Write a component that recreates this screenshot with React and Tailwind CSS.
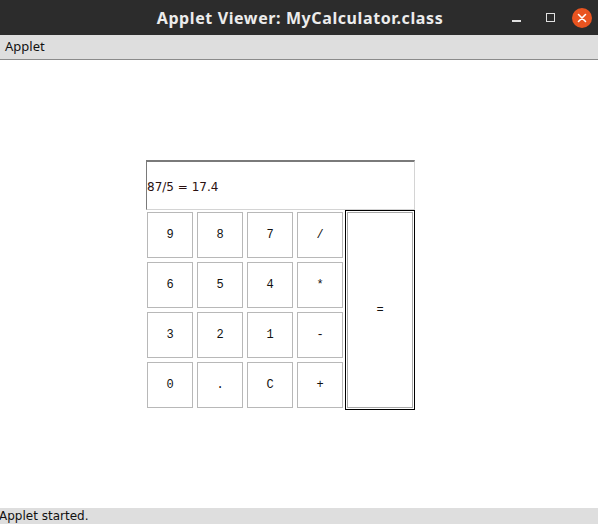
const keys = [
  ["9", "8", "7", "/"],
  ["6", "5", "4", "*"],
  ["3", "2", "1", "-"],
  ["0", ".", "C", "+"],
]

function Key({ label }) {
  return (
    <div className="w-[50px] h-[50px] p-[2px]">
      <div className="w-full h-full bg-white border border-[#b8b8b8] flex items-center justify-center text-[12px] text-[#111] font-['Liberation_Mono',monospace]">
        {label}
      </div>
    </div>
  )
}

export default function App() {
  return (
    <div className="w-[598px] h-[524px] flex flex-col bg-white overflow-hidden font-['Noto_Sans',sans-serif]">
      {/* Title bar */}
      <div className="h-[35px] bg-[#2c2c2c] flex items-center relative shrink-0">
        <div className="flex-1 text-center text-[16px] font-bold text-[#ececec] pl-[2px] tracking-[0.6px]">
          Applet Viewer: MyCalculator.class
        </div>
        <div className="absolute right-[6px] top-0 h-[35px] flex items-center">
          <div className="w-[34px] flex justify-center pt-[7px]">
            <div className="w-[9px] h-[2px] bg-[#e0e0e0]" />
          </div>
          <div className="w-[34px] flex justify-center">
            <div className="w-[9px] h-[9px] border-[1.5px] border-[#e0e0e0]" />
          </div>
          <div className="w-[20px] h-[20px] ml-[5px] rounded-full bg-[#e95420] flex items-center justify-center">
            <svg width="10" height="10" viewBox="0 0 10 10">
              <path d="M1.5 1.5 L8.5 8.5 M8.5 1.5 L1.5 8.5" stroke="#fff" strokeWidth="1.6" strokeLinecap="round" />
            </svg>
          </div>
        </div>
      </div>

      {/* Menu bar */}
      <div className="h-[25px] bg-[#dedede] border-b border-[#8a8a8a] flex items-center px-[5px] text-[13px] text-[#111] shrink-0">
        Applet
      </div>

      {/* Applet area */}
      <div className="flex-1 pl-[145px] pt-[100px]">
        <div className="w-[270px]">
          <div className="ml-[1px] w-[269px] h-[50px] border-t-2 border-l border-[#7a7a7a] border-r border-b border-r-[#d4d4d4] border-b-[#d4d4d4] flex items-center text-[12px] text-[#2a1010] font-['DejaVu_Sans',sans-serif] pt-[2px]">
            87/5 = 17.4
          </div>
          <div className="flex">
            <div className="flex flex-col">
              {keys.map((row, i) => (
                <div key={i} className="flex">
                  {row.map((k) => (
                    <Key key={k} label={k} />
                  ))}
                </div>
              ))}
            </div>
            <div className="w-[70px] h-[200px] border border-black p-[1px] bg-white">
              <div className="w-full h-full border border-[#a8a8a8] flex items-center justify-center text-[12px] text-[#111] font-['Liberation_Mono',monospace]">
                =
              </div>
            </div>
          </div>
        </div>
      </div>

      {/* Status bar */}
      <div className="h-[16px] bg-[#dedede] text-[12px] leading-[16px] text-[#111] -ml-[1px] font-['DejaVu_Sans',sans-serif] shrink-0">
        Applet started.
      </div>
    </div>
  )
}
